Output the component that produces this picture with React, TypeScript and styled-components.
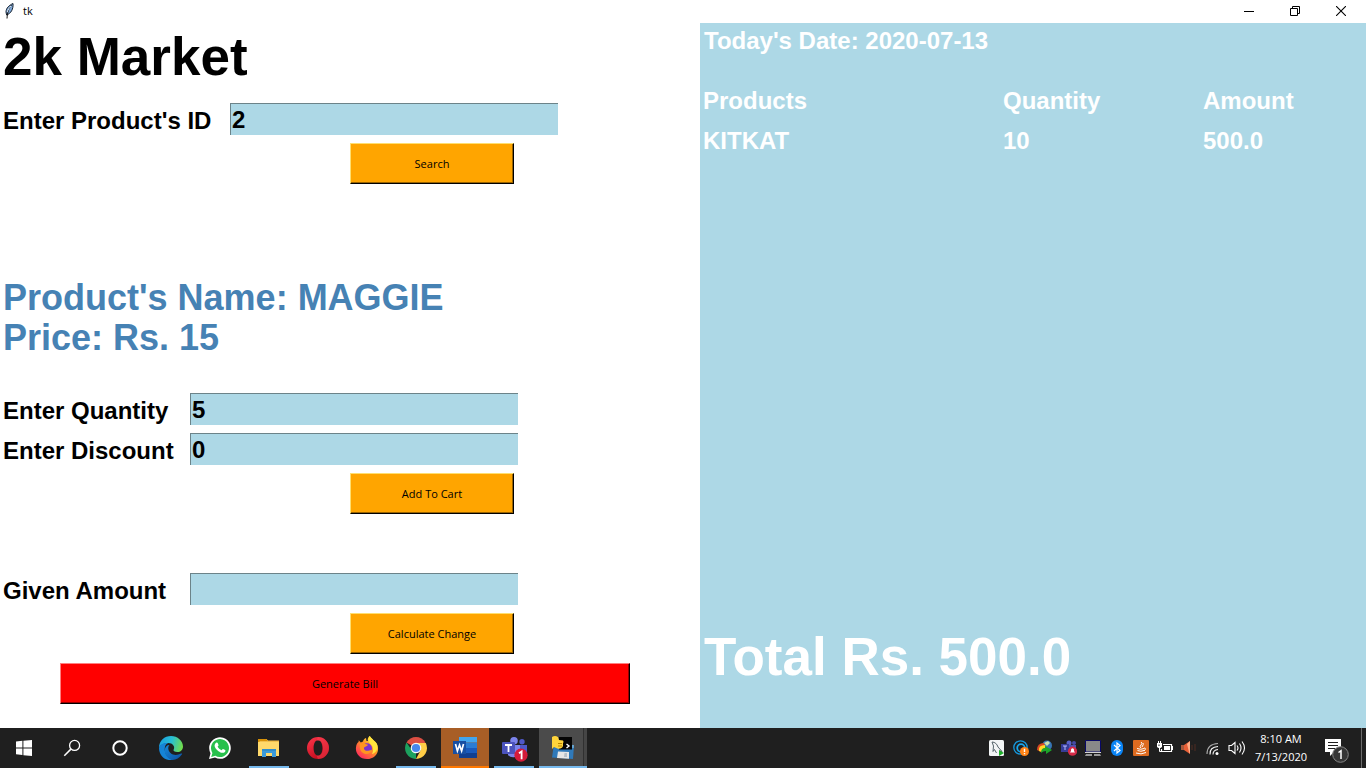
import React from "react";
import styled, { createGlobalStyle } from "styled-components";

const GlobalStyle = createGlobalStyle`
  * { box-sizing: border-box; }
  body { margin: 0; background: #fff; font-family: "Liberation Sans", Arial, sans-serif; }
  h1, h2, p { margin: 0; }
`;

const UI_FONT = `"Open Sans", "Noto Sans", sans-serif`;

const Screen = styled.div`
  display: flex;
  flex-direction: column;
  min-height: 100vh;
`;

const TitleBar = styled.header`
  display: flex;
  align-items: center;
  height: 23px;
  padding: 0 2px 2px;
  background: #fff;
  font: 11px/20px ${UI_FONT};
`;

const WindowTitle = styled.span`
  flex: 1;
  padding-left: 5px;
`;

const WindowButton = styled.button`
  display: grid;
  place-items: center;
  width: 46px;
  height: 20px;
  padding: 0;
  border: 0;
  background: transparent;
`;

const Workspace = styled.main`
  flex: 1;
  display: grid;
  grid-template-columns: minmax(0, 700px) minmax(0, 1fr);
`;

const OrderPane = styled.section`
  background: #fff;
`;

const ShopName = styled.h1`
  margin-bottom: 9px;
  padding-left: 3px;
  font-size: 53px;
  line-height: 68px;
`;

const FieldRow = styled.div<{ $labelWidth: number }>`
  display: grid;
  grid-template-columns: ${(p) => p.$labelWidth}px 328px;
  align-items: start;
  height: 40px;
  padding-top: 3px;
`;

const FieldLabel = styled.label`
  padding-left: 3px;
  font-size: 24px;
  font-weight: bold;
  line-height: 36px;
  white-space: nowrap;
`;

const Entry = styled.input`
  width: 100%;
  height: 32px;
  padding: 1px 1px 0;
  border: 0 solid #6c8389;
  border-width: 1px 0 0 1px;
  border-radius: 0;
  outline: 0;
  background: #add8e6;
  color: #000;
  font: bold 24px "Liberation Sans", Arial, sans-serif;
`;

const ActionRow = styled.div<{ $wide?: boolean }>`
  height: 50px;
  padding: 3px 0 0 ${(p) => (p.$wide ? 60 : 350)}px;
`;

const ActionButton = styled.button<{ $danger?: boolean }>`
  display: block;
  width: ${(p) => (p.$danger ? 570 : 164)}px;
  height: 41px;
  padding: 0;
  border: 1px solid;
  border-color: ${(p) => (p.$danger ? "#ff8080 #000 #000 #ff8080" : "#ffdf70 #000 #000 #ffdf70")};
  border-radius: 0;
  background: ${(p) => (p.$danger ? "#f00" : "#ffa500")};
  box-shadow: inset -1px -1px ${(p) => (p.$danger ? "#900" : "#996300")};
  color: #000;
  font: 11px ${UI_FONT};
`;

const ProductInfo = styled.div`
  margin: 88px 0 32px;
  padding-left: 3px;
  color: #4682b4;
  font-size: 36px;
  font-weight: bold;
  line-height: 40px;
`;

const PaymentGroup = styled.div`
  margin-top: 50px;
`;

const BillPane = styled.section`
  display: flex;
  flex-direction: column;
  background: #add8e6;
  color: #fff;
`;

const BillDate = styled.p`
  padding-left: 4px;
  font-size: 24px;
  font-weight: bold;
  line-height: 36px;
`;

const BillTable = styled.table`
  width: 100%;
  margin-top: 22px;
  border-collapse: collapse;
  table-layout: fixed;
  font-size: 24px;
  font-weight: bold;
  line-height: 40px;

  th, td { padding: 0 0 0 3px; text-align: left; }
  th:nth-child(1) { width: 300px; }
  th:nth-child(2) { width: 200px; }
`;

const Total = styled.h2`
  margin: auto 0 38px;
  padding-left: 4px;
  font-size: 53px;
  line-height: 66px;
`;

const Taskbar = styled.footer`
  display: flex;
  height: 40px;
  background: #1f1f1f;
  color: #fff;
`;

const TaskGroup = styled.nav<{ $gap?: number; $left?: number }>`
  display: flex;
  gap: ${(p) => p.$gap ?? 0}px;
  margin-left: ${(p) => p.$left ?? 0}px;
`;

const TaskButton = styled.button<{ $fill?: string; $line?: string; $full?: boolean }>`
  display: flex;
  flex-direction: column;
  align-items: center;
  width: 48px;
  height: 40px;
  padding: 8px 0 0;
  border: 0;
  background: ${(p) => p.$fill ?? "transparent"};

  &::after {
    content: "";
    width: ${(p) => (p.$full ? 48 : 40)}px;
    height: 2px;
    margin-top: auto;
    background: ${(p) => p.$line ?? "transparent"};
  }
`;

const Tray = styled.div`
  display: flex;
  align-items: center;
  margin-left: auto;
`;

const TrayButton = styled.button`
  display: grid;
  place-items: center;
  width: 24px;
  height: 40px;
  padding: 0;
  border: 0;
  background: transparent;
`;

const Clock = styled.time`
  width: 64px;
  text-align: center;
  font: 11px/18px ${UI_FONT};
  white-space: nowrap;
`;

const NoticeButton = styled(TrayButton)`
  width: 48px;
`;

const ShowDesktop = styled.div`
  width: 5px;
  height: 40px;
  border-left: 1px solid #6b6b6b;
`;

type IconProps = { size?: number; box?: string; children: React.ReactNode };
const Icon = ({ size = 24, box = "0 0 24 24", children }: IconProps) => (
  <svg width={size} height={size} viewBox={box} aria-hidden="true">{children}</svg>
);

const Feather = () => (
  <Icon size={16} box="0 0 16 16">
    <path d="M11 0.5 C7.5 2 4 5 4 9 L4.6 12 C9 10.5 11.5 6 11 .5Z" fill="#7fa8d8" stroke="#15202e" strokeWidth="1" />
    <path d="M9.5 2 C6.5 6 5.5 9 5 15.5" fill="none" stroke="#111" strokeWidth="1" />
    <path d="M9 3 C7 5 6 7 5.2 9" fill="none" stroke="#dce9f8" strokeWidth="1" />
  </Icon>
);

const WindowsLogo = () => (
  <Icon><path fill="#fff" d="M4 5.6 10.4 4.8V11.5H4ZM11.4 4.7 20 4V11.5H11.4ZM4 12.5H10.4V19L4 18.3ZM11.4 12.5H20V20L11.4 19.2Z" /></Icon>
);

const SearchIcon = () => (
  <Icon><g fill="none" stroke="#fff" strokeWidth="1.3"><circle cx="14.6" cy="9.4" r="5" /><path d="M10.9 13.1 4.3 19.7" strokeWidth="1.5" /></g></Icon>
);

const CortanaIcon = () => (
  <Icon><circle cx="12" cy="12" r="6.7" fill="none" stroke="#fff" strokeWidth="2" /></Icon>
);

const EdgeIcon = () => (
  <Icon>
    <defs>
      <linearGradient id="edgeTop" x1="0" y1=".3" x2="1" y2=".5"><stop stopColor="#1a9fe0" /><stop offset=".5" stopColor="#28bfd4" /><stop offset="1" stopColor="#71dd4c" /></linearGradient>
      <linearGradient id="edgeLow" x1="0" y1="0" x2="1" y2="1"><stop stopColor="#1688d8" /><stop offset="1" stopColor="#0c4fa0" /></linearGradient>
    </defs>
    <path d="M0 12C0 4.5 5.5 0 12 0S24 5 24 10.5C24 14 21.5 16 18.5 16C15.5 16 14 15 14.6 13.8C16.5 10.5 13.5 7 9.5 7C4 7 .5 10 0 12Z" fill="url(#edgeTop)" />
    <path d="M0 12C.8 8.2 5 6.6 9 7C6.5 8 5.5 11 5.8 14C6.2 18.5 9.5 22.5 14 23.8C6 25.5 0 19.5 0 12Z" fill="#1584d6" />
    <path d="M10.5 9C8.5 11 9 14.5 11.5 17C14.5 19.8 18.8 19.3 22 17.6C23 17.2 23.4 17.8 22.8 18.6C20.5 22 17.2 24 13.5 24C8.5 23 5.5 18.5 5.8 14C6 11 7.8 9 10.5 9Z" fill="url(#edgeLow)" />
  </Icon>
);

const WhatsAppIcon = () => (
  <Icon>
    <path d="M1 23 2.5 17.2A10.8 10.8 0 1 1 7 21.6Z" fill="#fff" />
    <path d="M3.2 20.9 4.4 16.9A9 9 0 1 1 7.4 19.8Z" fill="#28c04c" />
    <path d="M8.2 6.7c.6-.5 1.2-.2 1.5.4l.8 1.8c.2.5-.6 1.3-.9 1.7.8 1.7 2.1 2.8 3.9 3.6.5-.4 1.1-1.5 1.6-1.3l2.1 1c.5.4.2 1.5-.3 2-1.8 1.7-4.5.7-6.4-.7-2-1.4-3.7-3.7-3.9-5.3-.1-1.4.7-2.5 1.6-3.2Z" fill="#fff" />
  </Icon>
);

const FolderIcon = () => (
  <Icon>
    <path d="M1 3H9.5L11 4.5H22V20H1Z" fill="#f3c04c" />
    <path d="M1 6H22V20H1Z" fill="#ffd96b" />
    <path d="M1 3H9.5L10.5 5H2.5V6H1Z" fill="#d99208" />
    <path d="M5 21V13H19V21H15V17H9V21Z" fill="#3c9bd9" />
    <path d="M5 13H19V15H5Z" fill="#2f8dcc" />
  </Icon>
);

const OperaIcon = () => (
  <Icon>
    <defs><linearGradient id="opera" x1="0" y1="0" x2=".7" y2="1"><stop stopColor="#ff384c" /><stop offset="1" stopColor="#bb0718" /></linearGradient></defs>
    <path d="M12 1A11 11 0 1 0 12 23A11 11 0 1 0 12 1ZM12 4.3C14.8 4.3 16.4 7.8 16.4 12S14.8 19.7 12 19.7S7.6 16.2 7.6 12S9.2 4.3 12 4.3Z" fill="url(#opera)" fillRule="evenodd" />
    <path d="M12 1A11 11 0 0 1 12 23L10.5 19.4C15 20.5 17 16.5 17 12S15 3.5 10.5 4.6Z" fill="#ff4856" opacity=".45" />
  </Icon>
);

const FirefoxIcon = () => (
  <Icon>
    <defs><linearGradient id="firefox" x1=".9" y1=".1" x2=".2" y2="1"><stop stopColor="#fff44f" /><stop offset=".4" stopColor="#ff9a22" /><stop offset="1" stopColor="#ff2460" /></linearGradient></defs>
    <path d="M3.7 4.2 5.8 6.4 8 5.5C8.2 4 9.4 2.6 11 2L11.5 5H13C12.2 3.4 13 1.2 14.8 0C16 3 21 5 22.3 9C25.2 16.4 19.5 23 12 23S.2 17 1 11.4C1.2 8.5 2.2 7 3.6 6Z" fill="url(#firefox)" />
    <circle cx="12" cy="12.2" r="5" fill="#7b35ce" />
    <path d="M5 7.5C7 6.6 9 6.7 10.5 8L13 8.7C12.2 10.2 10.5 10.4 9.6 11C8.4 12 9 14.8 12 14.8C14 14.8 15 13.6 17 14C15.8 17 13 18.5 10.5 18C6.5 17.2 4 13.5 5 7.5Z" fill="#ff9620" />
    <path d="M14.8 0C16 3 21 5 22.3 9C23 14 20 17.5 17 18C19 14.5 18.2 10 15.3 7.8C13 6 13 2 14.8 0Z" fill="#ffe53e" />
  </Icon>
);

const ChromeIcon = () => (
  <Icon>
    <path d="M12 12 2.5 6.5A11 11 0 0 1 21.5 6.5Z" fill="#dd4f43" />
    <path d="M12 12V23A11 11 0 0 1 2.5 6.5L7 13Z" fill="#1ca15e" />
    <path d="M12 7H21.8A11 11 0 0 1 12 23L16.5 14.5Z" fill="#ffcd46" />
    <circle cx="12" cy="12" r="5.3" fill="#f6f6f6" /><circle cx="12" cy="12" r="4.1" fill="#4788ee" />
  </Icon>
);

const WordIcon = () => (
  <Icon>
    <path d="M6 1H24V6.5H6Z" fill="#42a5ee" /><path d="M6 6.5H24V12H6Z" fill="#2b7cd3" /><path d="M6 12H24V17H6Z" fill="#195abd" /><path d="M6 17H24V22H6Z" fill="#103f91" />
    <rect y="5" width="13" height="13" fill="#174fa3" />
    <path d="M2.5 8 4.4 15 6.5 9 8.6 15 10.5 8" fill="none" stroke="#fff" strokeWidth="1.7" />
  </Icon>
);

const TeamsIcon = () => (
  <svg width="28" height="27" viewBox="0 0 28 27" aria-hidden="true">
    <circle cx="14" cy="4.8" r="3.8" fill="#7b83eb" /><circle cx="22" cy="5.7" r="2.7" fill="#5059c9" />
    <path d="M16 9H27V16A5 5 0 0 1 18 19Z" fill="#5059c9" /><path d="M8 9H20V16A7 7 0 0 1 8 19Z" fill="#7b83eb" />
    <rect x="2" y="6" width="13" height="12" rx="1" fill="#4b53bc" /><path d="M5 9H12M8.5 9V16" stroke="#fff" strokeWidth="1.8" />
    <circle cx="21" cy="19.2" r="6.6" fill="#d41b3a" /><path d="M19 17.2 21.6 15.4V23.2" fill="none" stroke="#fff" strokeWidth="1.8" />
  </svg>
);

const IdleIcon = () => (
  <Icon>
    <path d="M3 8 23 9.5 22 23 1 21.5Z" fill="#2f79b9" /><path d="M4 8 23 9 22.8 12 3.8 11Z" fill="#67a5d0" />
    <path d="M7 15.5 18 16V22.7L6 22Z" fill="#e6e6e6" /><path d="M13.5 17H16V21H13Z" fill="#b7c1ca" />
    <path d="M8 1H21V13.5H8Z" fill="#050505" />
    <path d="M15.5 8 18 10 15.5 12" fill="none" stroke="#fff" strokeWidth="1.4" />
    <path d="M1 1Q4-1 7 1L8 4 12 4.5Q13 6 12 7L12 10Q11 13 7 12.7L3 11 1 13Z" fill="#ffd43b" /><path d="M7 7.5H11M7 10H11" stroke="#b98500" />
  </Icon>
);

const apps = [
  { name: "Edge", icon: <EdgeIcon /> },
  { name: "WhatsApp", icon: <WhatsAppIcon /> },
  { name: "File Explorer", icon: <FolderIcon />, line: "#76b9ed" },
  { name: "Opera", icon: <OperaIcon /> },
  { name: "Firefox", icon: <FirefoxIcon /> },
  { name: "Chrome", icon: <ChromeIcon />, line: "#76b9ed" },
  { name: "Word", icon: <WordIcon />, fill: "#a85e26", line: "#ff7800", full: true },
  { name: "Teams", icon: <TeamsIcon />, line: "#76b9ed" },
  { name: "Python", icon: <IdleIcon />, fill: "linear-gradient(90deg, #4b4b4b 44px, #303030 44px, #303030 45px, #454545 45px)", line: "#76b9ed", full: true },
];

const trayItems = [
  { name: "MySQL", icon: <Icon size={16} box="0 0 16 16"><rect width="15" height="16" rx="1.5" fill="#f3f5f6" /><path d="M3 2C6 2 8 4 9 7L13 11.5 10 11M3 2 4.5 6 4 11.5 5.5 9.5 7.5 13" fill="none" stroke="#56646b" strokeWidth="1" /><path d="M10 10 15 13 10 16Z" fill="#20b22c" /></Icon> },
  { name: "Updates", icon: <Icon size={16} box="0 0 16 16"><circle cx="7.5" cy="7.5" r="6.7" fill="none" stroke="#1599df" strokeWidth="1.3" /><circle cx="8" cy="8" r="3.8" fill="none" stroke="#18a7ed" strokeWidth="1.8" /><circle cx="11.5" cy="11.5" r="4.5" fill="#ff8417" /><path d="M11.5 8.8V12M11.5 13V14.3" stroke="#fff" strokeWidth="1.4" /></Icon> },
  { name: "Download Manager", icon: <Icon size={16} box="0 0 16 16"><circle cx="10" cy="5.5" r="5" fill="#3775b5" /><path d="M7 3 11 1 13 3 10 6Z" fill="#c6dfb1" /><path d="M0 10Q0 3 7 3L8 6Q4 6 4 12Z" fill="#d84822" /><path d="M2 11Q1 5 8 5L9 8Q6 8 5 12Z" fill="#ffd829" /><path d="M4 13Q4 8 8 8L8 6 15 10 9 14 9 11Q6 11 4 13Z" fill="#1ca52a" /></Icon> },
  { name: "Teams status", icon: <Icon size={16} box="0 0 16 16"><circle cx="8" cy="3" r="2.5" fill="#5961c8" /><circle cx="13" cy="3" r="2" fill="#454aa7" /><path d="M5 5H15V12H5Z" fill="#4b51b2" /><rect y="4" width="8" height="8" fill="#363c98" /><path d="M2 6H6M4 6V10" stroke="#b6baff" /><circle cx="11.5" cy="11.2" r="4.6" fill="#d52b47" /><path d="M9 12.5H14L13 11V9.5Q11.5 7 10 9.5V11Z" fill="#fff" /></Icon> },
  { name: "Touchpad", icon: <Icon size={16} box="0 0 16 16"><path d="M.5 12V.5H15.5V12Z" fill="#898989" stroke="#080866" /><path d="M0 12.5H16" stroke="#d3d3d3" /><path d="M1 14H7V16H0ZM9 14H15L16 16H9Z" fill="#999" /></Icon> },
  { name: "Bluetooth", icon: <Icon size={16} box="0 0 16 16"><rect x="2" width="12" height="16" rx="6" fill="#0a84f5" /><path d="M5 5 11 10.5 8 13V3L11 5.5 5 11" fill="none" stroke="#fff" strokeWidth="1.2" /></Icon> },
  { name: "Java", icon: <Icon size={16} box="0 0 16 16"><rect width="16" height="16" rx="1" fill="#dd6b20" /><path d="M8 2Q10 3 8 5T8 8M10 3Q11 4 9 7M4 8.5Q8 10 11 8.5M11 8Q14 8 11 11M4.5 10.5Q8 12 11 10.5M3 13Q8 15 13 12.5" fill="none" stroke="#fff" /></Icon> },
  { name: "Battery", icon: <Icon size={16} box="0 0 16 16"><path d="M6 4.5H14.5V11.5H4.5V9" fill="none" stroke="#fff" strokeWidth="1.2" /><path d="M7 6H13V10H7ZM15 6H16V10H15ZM0 3H5V7L3.5 8H1.5L0 7Z" fill="#fff" /><path d="M1.5 1V4M3.5 1V4M2.5 7V11.5H4.5" fill="none" stroke="#fff" /><path d="M2 4.5V6" stroke="#1f1f1f" /></Icon> },
  { name: "Sound device", icon: <Icon size={16} box="0 0 16 16"><path d="M0 5H4V10H0Z" fill="#a6583b" /><path d="M3 5 9 1V14L3 10Z" fill="#e75e36" /><path d="M6 4 9 1V14L8 12Z" fill="#ffac85" /><path d="M11 5V10M14 4V11" stroke="#512c22" /></Icon> },
  { name: "Wi-Fi", icon: <Icon size={16} box="0 0 16 16"><g fill="none" stroke="#aaa" strokeWidth="1.1"><path d="M2 14Q2 4 13 3.5" /><path d="M5 14.5Q4.5 7 13 6.5M8 14.5Q8 10 13 9.5" stroke="#f7f7f7" /></g><circle cx="12" cy="13.5" r="1.5" fill="#fff" /></Icon> },
  { name: "Volume", icon: <svg width="18" height="16" viewBox="0 0 18 16" aria-hidden="true"><path d="M1 5.5H3.5L7 2.5V13.5L3.5 10.5H1ZM9 5.5Q11 8 9 10.5M11.5 3.5Q14.5 8 11.5 12.5M14 1.5Q19 8 14 14.5" fill="none" stroke="#fff" strokeWidth="1.1" /></svg> },
];

type FieldProps = { id: string; label: string; value?: string; labelWidth?: number };
const Field = ({ id, label, value = "", labelWidth = 190 }: FieldProps) => (
  <FieldRow $labelWidth={labelWidth}>
    <FieldLabel htmlFor={id}>{label}</FieldLabel>
    <Entry id={id} type="text" defaultValue={value} />
  </FieldRow>
);

const cart = [{ product: "KITKAT", quantity: "10", amount: "500.0" }];

export default function App() {
  return (
    <Screen>
      <GlobalStyle />
      <TitleBar>
        <Feather />
        <WindowTitle>tk</WindowTitle>
        <WindowButton aria-label="Minimize"><Icon size={10} box="0 0 10 10"><path d="M0 5.5H10" stroke="#000" /></Icon></WindowButton>
        <WindowButton aria-label="Restore"><Icon size={10} box="0 0 10 10"><path d="M.5 2.5H7.5V9.5H.5ZM2.5 2.5V.5H9.5V7.5H7.5" fill="none" stroke="#000" /></Icon></WindowButton>
        <WindowButton aria-label="Close"><Icon size={10} box="0 0 10 10"><path d="M0 0 10 10M10 0 0 10" stroke="#000" strokeWidth="1.1" /></Icon></WindowButton>
      </TitleBar>

      <Workspace>
        <OrderPane>
          <ShopName>2k Market</ShopName>
          <Field id="product-id" label="Enter Product's ID" value="2" labelWidth={230} />
          <ActionRow><ActionButton type="button">Search</ActionButton></ActionRow>
          <ProductInfo>
            <p>Product's Name: MAGGIE</p>
            <p>Price: Rs. 15</p>
          </ProductInfo>
          <Field id="quantity" label="Enter Quantity" value="5" />
          <Field id="discount" label="Enter Discount" value="0" />
          <ActionRow><ActionButton type="button">Add To Cart</ActionButton></ActionRow>
          <PaymentGroup>
            <Field id="given" label="Given Amount" />
            <ActionRow><ActionButton type="button">Calculate Change</ActionButton></ActionRow>
            <ActionRow $wide><ActionButton type="button" $danger>Generate Bill</ActionButton></ActionRow>
          </PaymentGroup>
        </OrderPane>

        <BillPane>
          <BillDate>Today's Date: 2020-07-13</BillDate>
          <BillTable>
            <thead><tr><th>Products</th><th>Quantity</th><th>Amount</th></tr></thead>
            <tbody>
              {cart.map((item) => (
                <tr key={item.product}><td>{item.product}</td><td>{item.quantity}</td><td>{item.amount}</td></tr>
              ))}
            </tbody>
          </BillTable>
          <Total>Total Rs. 500.0</Total>
        </BillPane>
      </Workspace>

      <Taskbar>
        <TaskGroup aria-label="System">
          <TaskButton aria-label="Start"><WindowsLogo /></TaskButton>
          <TaskButton aria-label="Search Windows"><SearchIcon /></TaskButton>
          <TaskButton aria-label="Cortana"><CortanaIcon /></TaskButton>
        </TaskGroup>
        <TaskGroup aria-label="Applications" $gap={1} $left={3}>
          {apps.map((app) => (
            <TaskButton key={app.name} aria-label={app.name} $fill={app.fill} $line={app.line} $full={app.full}>{app.icon}</TaskButton>
          ))}
        </TaskGroup>
        <Tray>
          {trayItems.map((item) => (
            <TrayButton key={item.name} aria-label={item.name}>{item.icon}</TrayButton>
          ))}
          <Clock dateTime="2020-07-13T08:10">8:10 AM<br />7/13/2020</Clock>
          <NoticeButton aria-label="Notifications">
            <svg width="26" height="30" viewBox="0 -4 26 30" aria-hidden="true">
              <path d="M1 2H17V15H10L6 19V15H1Z" fill="#fff" />
              <path d="M4 5.5H14M4 8.5H14M4 11.5H11" stroke="#1f1f1f" />
              <circle cx="16.5" cy="17.5" r="7.8" fill="#363636" stroke="#858585" />
              <path d="M14.5 15.5 17 13.7V22" fill="none" stroke="#fff" strokeWidth="1.5" />
            </svg>
          </NoticeButton>
          <ShowDesktop />
        </Tray>
      </Taskbar>
    </Screen>
  );
}
